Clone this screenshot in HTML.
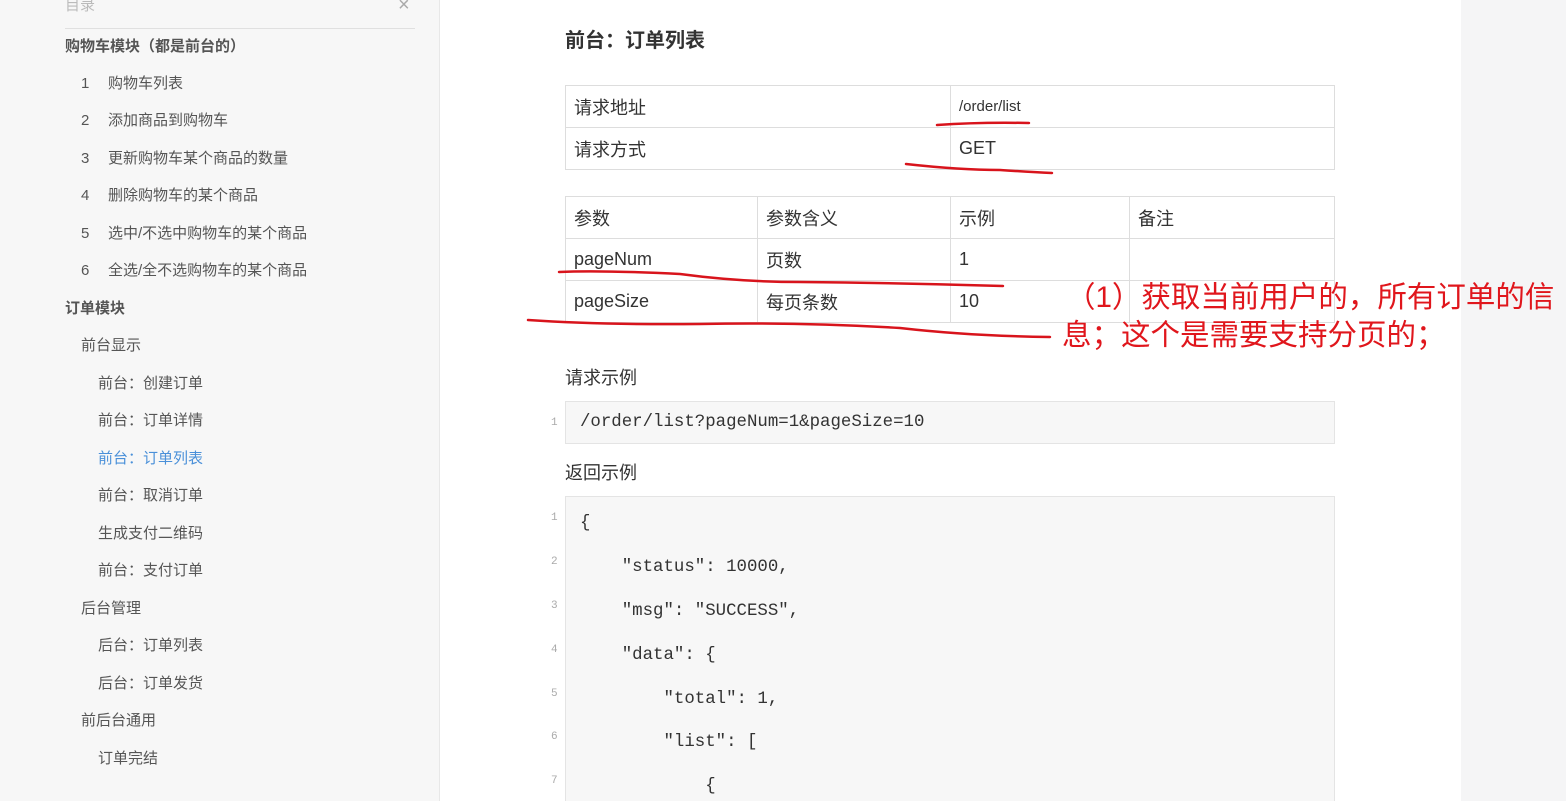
<!DOCTYPE html>
<html><head><meta charset="utf-8"><style>
*{margin:0;padding:0;box-sizing:border-box}
html{width:1566px;height:801px;overflow:hidden}
body{width:1566px;height:801px;overflow:hidden;background:#f5f5f6;position:relative;font-family:"Liberation Sans","Noto Sans CJK SC",sans-serif;}
.side{position:absolute;left:0;top:0;width:440px;height:801px;background:#f7f7f7;border-right:1px solid #e8e8e8}
.main{position:absolute;left:440px;top:0;width:1021px;height:801px;background:#fff}
.t{position:absolute;white-space:nowrap;font-size:15px;color:#555;line-height:20px}
.a{position:absolute;white-space:nowrap}
table{position:absolute;border-collapse:collapse;font-size:18px;color:#333}
td{border:1px solid #ddd;height:42px;padding:0 8px;vertical-align:middle}
.code{position:absolute;left:565px;width:770px;background:#f7f7f7;border:1px solid #e4e4e4}
.mono{font-family:"Liberation Mono","DejaVu Sans Mono",monospace;font-size:17.4px;color:#333}
.ln{position:absolute;left:551px;font-family:"Liberation Mono",monospace;font-size:11px;color:#aaa}
.red{color:#e0161c;font-size:29.5px;position:absolute;white-space:nowrap;font-family:"Liberation Sans","Noto Sans CJK SC",sans-serif}
</style></head><body>
<div class="side"></div>
<div class="main"></div>
<div class="t" style="left:65px;top:-4px;color:#bbb;font-size:15px">目录</div>
<div class="a" style="left:398px;top:-6px;font-size:20px;color:#aaa">×</div>
<div style="position:absolute;left:65px;top:28px;width:350px;height:1px;background:#e0e0e0"></div>
<div class="t" style="left:65px;top:37px;font-weight:bold">购物车模块（都是前台的）</div>
<div class="t" style="left:81px;top:74px">1</div><div class="t" style="left:108px;top:74px">购物车列表</div>
<div class="t" style="left:81px;top:111px">2</div><div class="t" style="left:108px;top:111px">添加商品到购物车</div>
<div class="t" style="left:81px;top:149px">3</div><div class="t" style="left:108px;top:149px">更新购物车某个商品的数量</div>
<div class="t" style="left:81px;top:186px">4</div><div class="t" style="left:108px;top:186px">删除购物车的某个商品</div>
<div class="t" style="left:81px;top:224px">5</div><div class="t" style="left:108px;top:224px">选中/不选中购物车的某个商品</div>
<div class="t" style="left:81px;top:261px">6</div><div class="t" style="left:108px;top:261px">全选/全不选购物车的某个商品</div>
<div class="t" style="left:65px;top:299px;font-weight:bold">订单模块</div>
<div class="t" style="left:81px;top:336px">前台显示</div>
<div class="t" style="left:98px;top:374px">前台：创建订单</div>
<div class="t" style="left:98px;top:411px">前台：订单详情</div>
<div class="t" style="left:98px;top:449px;color:#4a90d9">前台：订单列表</div>
<div class="t" style="left:98px;top:486px">前台：取消订单</div>
<div class="t" style="left:98px;top:524px">生成支付二维码</div>
<div class="t" style="left:98px;top:561px">前台：支付订单</div>
<div class="t" style="left:81px;top:599px">后台管理</div>
<div class="t" style="left:98px;top:636px">后台：订单列表</div>
<div class="t" style="left:98px;top:674px">后台：订单发货</div>
<div class="t" style="left:81px;top:711px">前后台通用</div>
<div class="t" style="left:98px;top:749px">订单完结</div>

<div class="a" style="left:565px;top:24px;font-size:20px;font-weight:bold;color:#333">前台：订单列表</div>
<table style="left:565px;top:85px;width:770px">
<tr><td style="width:385px">请求地址</td><td style="font-size:15px">/order/list</td></tr>
<tr><td>请求方式</td><td>GET</td></tr></table>
<table style="left:565px;top:196px;width:770px">
<tr><td style="width:192px">参数</td><td style="width:193px">参数含义</td><td style="width:179px">示例</td><td>备注</td></tr>
<tr><td>pageNum</td><td>页数</td><td>1</td><td></td></tr>
<tr><td>pageSize</td><td>每页条数</td><td>10</td><td></td></tr></table>

<div class="a" style="left:565px;top:364px;font-size:18px;color:#333">请求示例</div>
<div class="code" style="top:401px;height:43px"></div>
<div class="ln" style="top:417px">1</div>
<div class="a mono" style="left:580px;top:413px">/order/list?pageNum=1&amp;pageSize=10</div>
<div class="a" style="left:565px;top:459px;font-size:18px;color:#333">返回示例</div>
<div class="code" style="top:496px;height:310px"></div>
<div class="ln" style="top:512px">1</div><div class="a mono" style="left:580px;top:514px">{</div>
<div class="ln" style="top:556px">2</div><div class="a mono" style="left:580px;top:558px">&nbsp;&nbsp;&nbsp;&nbsp;"status": 10000,</div>
<div class="ln" style="top:600px">3</div><div class="a mono" style="left:580px;top:602px">&nbsp;&nbsp;&nbsp;&nbsp;"msg": "SUCCESS",</div>
<div class="ln" style="top:644px">4</div><div class="a mono" style="left:580px;top:646px">&nbsp;&nbsp;&nbsp;&nbsp;"data": {</div>
<div class="ln" style="top:688px">5</div><div class="a mono" style="left:580px;top:690px">&nbsp;&nbsp;&nbsp;&nbsp;&nbsp;&nbsp;&nbsp;&nbsp;"total": 1,</div>
<div class="ln" style="top:731px">6</div><div class="a mono" style="left:580px;top:733px">&nbsp;&nbsp;&nbsp;&nbsp;&nbsp;&nbsp;&nbsp;&nbsp;"list": [</div>
<div class="ln" style="top:775px">7</div><div class="a mono" style="left:580px;top:777px">&nbsp;&nbsp;&nbsp;&nbsp;&nbsp;&nbsp;&nbsp;&nbsp;&nbsp;&nbsp;&nbsp;&nbsp;{</div>

<div class="red" style="left:1066px;top:274px">（1）获取当前用户的，所有订单的信</div>
<div class="red" style="left:1062px;top:312px">息；这个是需要支持分页的；</div>
<svg style="position:absolute;left:0;top:0" width="1566" height="801">
<g fill="none" stroke="#d8141c" stroke-width="2.5" stroke-linecap="round">
<path d="M937 125 Q980 122 1029 123"/>
<path d="M906 164 Q960 170 1000 170 Q1030 172 1052 173"/>
<path d="M559 272 Q600 270 680 274 Q740 282 800 282 Q900 283 1003 286"/>
<path d="M528 320 Q600 325 700 324 Q800 322 900 328 Q970 336 1050 337"/>
</g></svg>
</body></html>
